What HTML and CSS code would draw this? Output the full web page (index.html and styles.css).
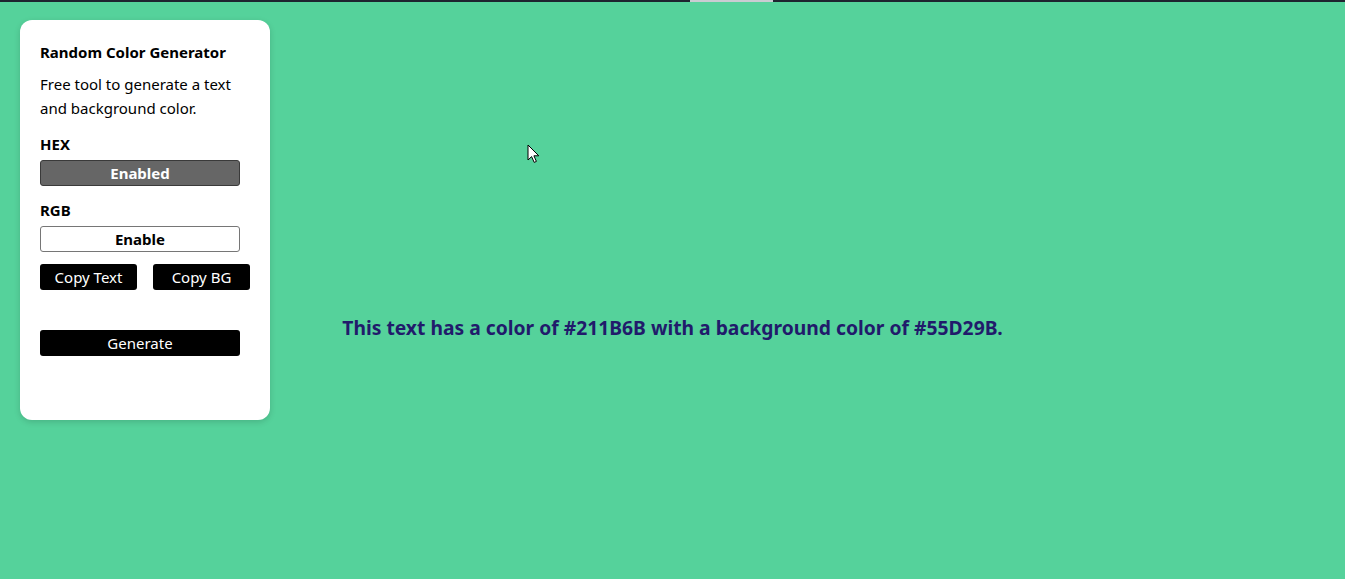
FILE: index.html
```html
<!DOCTYPE html>
<html lang="en">
<head>
<meta charset="utf-8">
<title>Random Color Generator</title>
<link rel="stylesheet" href="styles.css">
</head>
<body>
<div class="topbar"><span class="tab"></span></div>
<div class="page">
  <aside class="card">
    <h1 class="title">Random Color Generator</h1>
    <p class="desc">Free tool to generate a text and background color.</p>
    <div class="label">HEX</div>
    <button class="toggle on">Enabled</button>
    <div class="label">RGB</div>
    <button class="toggle off">Enable</button>
    <div class="copy-row">
      <button class="btn-dark copy">Copy Text</button>
      <button class="btn-dark copy">Copy BG</button>
    </div>
    <button class="btn-dark generate">Generate</button>
  </aside>
  <main class="message">This text has a color of #211B6B with a background color of #55D29B.</main>
</div>
<svg class="cursor" width="13" height="20" viewBox="0 0 13 20" aria-hidden="true">
  <path d="M1 1 L1 16 L4.6 12.6 L7.2 18.4 L9.4 17.4 L6.9 11.8 L11.8 11.8 Z" fill="#fff" stroke="#000" stroke-width="1" stroke-linejoin="round"/>
</svg>
</body>
</html>
```
FILE: styles.css
```css
* { box-sizing: border-box; }
html, body { margin: 0; padding: 0; height: 100%; }
body {
  background: #55d29b;
  font-family: "Noto Sans", "Open Sans", sans-serif;
  color: #000;
  overflow: hidden;
  display: flex;
  flex-direction: column;
}
.topbar {
  height: 2px;
  background: #1e2530;
  display: flex;
  justify-content: flex-start;
  padding-left: 690px;
  flex: none;
}
.tab { width: 83px; height: 2px; background: #c9ccd2; }
.page {
  flex: 1;
  display: grid;
  grid-template: 1fr / 1fr;
}
.card {
  grid-area: 1 / 1;
  justify-self: start;
  align-self: start;
  margin: 18px 0 0 20px;
  width: 250px;
  height: 400px;
  background: #fff;
  border-radius: 12px;
  box-shadow: 0 2px 6px rgba(0,0,0,0.15);
  padding: 22px 20px 20px 20px;
  display: flex;
  flex-direction: column;
  align-items: flex-start;
}
.title {
  margin: 0;
  font-size: 15px;
  font-weight: 700;
  line-height: 20px;
}
.desc {
  margin: 10px 0 0 0;
  font-size: 15px;
  line-height: 24px;
}
.label {
  margin-top: 14px;
  font-size: 15px;
  font-weight: 700;
  line-height: 20px;
}
.toggle {
  margin-top: 6px;
  width: 200px;
  height: 26px;
  border-radius: 3px;
  font-family: inherit;
  font-size: 15px;
  font-weight: 700;
  padding: 0;
  line-height: 24px;
}
.toggle.on {
  background: #666;
  color: #fff;
  border: 1px solid #3a3a3a;
}
.toggle.off {
  background: #fff;
  color: #000;
  border: 1px solid #767676;
}
.toggle + .label { margin-top: 14px; }
.btn-dark {
  background: #000;
  color: #fff;
  border: none;
  border-radius: 3px;
  font-family: inherit;
  font-size: 15px;
  height: 26px;
  padding: 0;
  line-height: 26px;
}
.copy-row {
  margin-top: 12px;
  display: flex;
  gap: 16px;
}
.copy { width: 97px; }
.generate { width: 200px; margin-top: 40px; }
.message {
  grid-area: 1 / 1;
  align-self: start;
  margin-top: 314px;
  text-align: center;
  color: #211b6b;
  font-weight: 700;
  font-size: 19.3px;
  line-height: 24px;
}
.cursor {
  position: absolute;
  left: 527px;
  top: 144px;
  pointer-events: none;
}
```
